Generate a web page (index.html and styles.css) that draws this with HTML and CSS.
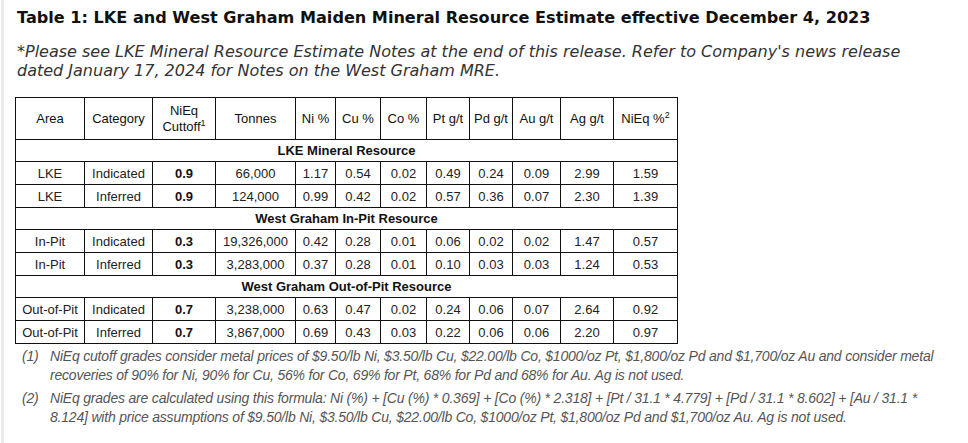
FILE: index.html
```html
<!DOCTYPE html>
<html>
<head>
<meta charset="utf-8">
<link rel="stylesheet" href="styles.css">
</head>
<body>
<div class="page">
  <h1 class="title">Table 1: LKE and West Graham Maiden Mineral Resource Estimate effective December 4, 2023</h1>
  <p class="intro">*Please see LKE Mineral Resource Estimate Notes at the end of this release. Refer to Company's news release dated January 17, 2024 for Notes on the West Graham MRE.</p>
  <table class="mre">
    <colgroup>
      <col class="c-area"><col class="c-cat"><col class="c-cut"><col class="c-ton"><col class="c-ni"><col class="c-cu"><col class="c-co"><col class="c-pt"><col class="c-pd"><col class="c-au"><col class="c-ag"><col class="c-eq">
    </colgroup>
    <thead>
      <tr class="head">
        <th>Area</th><th>Category</th><th>NiEq<br>Cuttoff<sup>1</sup></th><th>Tonnes</th><th>Ni %</th><th>Cu %</th><th>Co %</th><th>Pt g/t</th><th>Pd g/t</th><th>Au g/t</th><th>Ag g/t</th><th>NiEq %<sup>2</sup></th>
      </tr>
    </thead>
    <tbody>
      <tr class="section"><td colspan="12">LKE Mineral Resource</td></tr>
      <tr><td>LKE</td><td>Indicated</td><td class="b">0.9</td><td>66,000</td><td>1.17</td><td>0.54</td><td>0.02</td><td>0.49</td><td>0.24</td><td>0.09</td><td>2.99</td><td>1.59</td></tr>
      <tr><td>LKE</td><td>Inferred</td><td class="b">0.9</td><td>124,000</td><td>0.99</td><td>0.42</td><td>0.02</td><td>0.57</td><td>0.36</td><td>0.07</td><td>2.30</td><td>1.39</td></tr>
      <tr class="section"><td colspan="12">West Graham In-Pit Resource</td></tr>
      <tr><td>In-Pit</td><td>Indicated</td><td class="b">0.3</td><td>19,326,000</td><td>0.42</td><td>0.28</td><td>0.01</td><td>0.06</td><td>0.02</td><td>0.02</td><td>1.47</td><td>0.57</td></tr>
      <tr><td>In-Pit</td><td>Inferred</td><td class="b">0.3</td><td>3,283,000</td><td>0.37</td><td>0.28</td><td>0.01</td><td>0.10</td><td>0.03</td><td>0.03</td><td>1.24</td><td>0.53</td></tr>
      <tr class="section"><td colspan="12">West Graham Out-of-Pit Resource</td></tr>
      <tr><td>Out-of-Pit</td><td>Indicated</td><td class="b">0.7</td><td>3,238,000</td><td>0.63</td><td>0.47</td><td>0.02</td><td>0.24</td><td>0.06</td><td>0.07</td><td>2.64</td><td>0.92</td></tr>
      <tr><td>Out-of-Pit</td><td>Inferred</td><td class="b">0.7</td><td>3,867,000</td><td>0.69</td><td>0.43</td><td>0.03</td><td>0.22</td><td>0.06</td><td>0.06</td><td>2.20</td><td>0.97</td></tr>
    </tbody>
  </table>
  <ol class="notes">
    <li><span class="num">(1)</span><span class="txt">NiEq cutoff grades consider metal prices of $9.50/lb Ni, $3.50/lb Cu, $22.00/lb Co, $1000/oz Pt, $1,800/oz Pd and $1,700/oz Au and consider metal recoveries of 90% for Ni, 90% for Cu, 56% for Co, 69% for Pt, 68% for Pd and 68% for Au. Ag is not used.</span></li>
    <li><span class="num">(2)</span><span class="txt">NiEq grades are calculated using this formula: Ni (%) + [Cu (%) * 0.369] + [Co (%) * 2.318] + [Pt / 31.1 * 4.779] + [Pd / 31.1 * 8.602] + [Au / 31.1 * 8.124] with price assumptions of $9.50/lb Ni, $3.50/lb Cu, $22.00/lb Co, $1000/oz Pt, $1,800/oz Pd and $1,700/oz Au. Ag is not used.</span></li>
  </ol>
</div>
</body>
</html>
```
FILE: styles.css
```css
html, body {
  margin: 0;
  padding: 0;
  background: #fff;
}
body {
  height: 443px;
  overflow: hidden;
}
.page {
  margin-left: 1px;
  border-left: 3px solid #ececec;
  height: 443px;
  box-sizing: border-box;
  padding: 8px 0 0 13px;
}
.title {
  margin: 0;
  font-family: "DejaVu Sans", Verdana, sans-serif;
  font-weight: bold;
  font-size: 16.1px;
  line-height: 20px;
  color: #111;
}
.intro {
  margin: 14px 0 0 0;
  font-family: "DejaVu Sans", Verdana, sans-serif;
  font-style: italic;
  font-size: 16px;
  line-height: 19px;
  color: #333;
  width: 905px;
}
.mre {
  margin: 17px 0 0 -2px;
  border-collapse: collapse;
  table-layout: fixed;
  width: 662px;
  font-family: "Liberation Sans", Arial, sans-serif;
  font-size: 13px;
  color: #222;
}
.c-area { width: 69px; }
.c-cat { width: 68px; }
.c-cut { width: 63px; }
.c-ton { width: 80px; }
.c-ni { width: 40px; }
.c-cu { width: 45px; }
.c-co { width: 46px; }
.c-pt { width: 43px; }
.c-pd { width: 43px; }
.c-au { width: 48px; }
.c-ag { width: 53px; }
.c-eq { width: 64px; }
.mre th, .mre td {
  border: 1px solid #111;
  padding: 0;
  text-align: center;
  white-space: nowrap;
  overflow: hidden;
}
.mre th {
  font-weight: normal;
  color: #111;
  height: 41px;
  line-height: 16px;
}
.mre sup {
  font-size: 9px;
  line-height: 0;
  vertical-align: 5px;
}
.mre td {
  height: 22px;
  line-height: 15px;
}
.mre .section td {
  height: 21px;
  font-weight: bold;
  color: #111;
}
.mre td.b {
  font-weight: bold;
  color: #111;
}
.notes {
  list-style: none;
  margin: 3px 0 0 0;
  padding: 0 0 0 5px;
  font-family: "Liberation Sans", Arial, sans-serif;
  font-style: italic;
  font-size: 14px;
  letter-spacing: -0.2px;
  line-height: 19px;
  color: #555;
  width: 925px;
}
.notes li {
  display: flex;
  margin-bottom: 4px;
}
.notes .num {
  flex: 0 0 28px;
}
.notes .txt {
  flex: 1;
}
```
